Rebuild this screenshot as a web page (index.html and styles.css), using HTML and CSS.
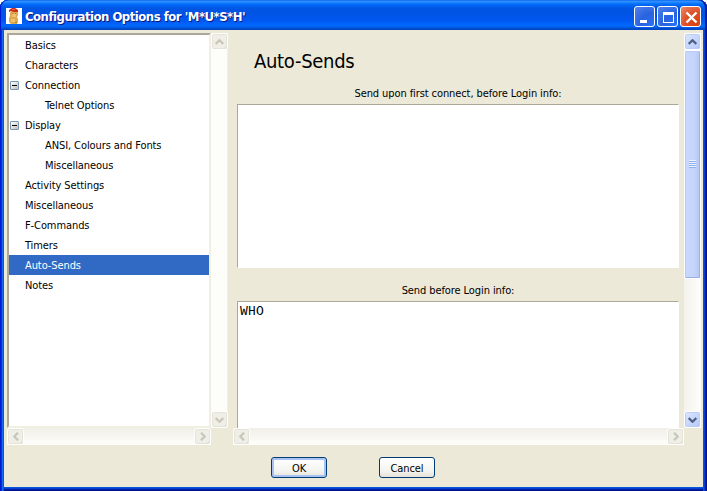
FILE: index.html
```html
<!DOCTYPE html>
<html lang="en">
<head>
<meta charset="utf-8">
<title>Configuration Options for 'M*U*S*H'</title>
<link rel="stylesheet" href="styles.css">
</head>
<body>
<svg width="0" height="0" class="defs">
  <symbol id="up" viewBox="0 0 9 6"><path d="M.7 5 4.5 1.3 8.3 5" fill="none" stroke="currentColor" stroke-width="2.3"/></symbol>
  <symbol id="down" viewBox="0 0 9 6"><path d="M.7 1 4.5 4.7 8.3 1" fill="none" stroke="currentColor" stroke-width="2.3"/></symbol>
  <symbol id="left" viewBox="0 0 6 9"><path d="M5 .7 1.3 4.5 5 8.3" fill="none" stroke="currentColor" stroke-width="2.3"/></symbol>
  <symbol id="right" viewBox="0 0 6 9"><path d="M1 .7 4.7 4.5 1 8.3" fill="none" stroke="currentColor" stroke-width="2.3"/></symbol>
</svg>
<div class="window">
  <header class="titlebar">
    <svg class="app-icon" width="16" height="16" viewBox="0 0 16 16">
      <path d="M0 0h16v16H0z" fill="#fff"/>
      <path d="M5 3h7v4l-1 2 1 2v3l-1 2H5l-2-2v-4l1-2V5z" fill="#dfa950"/>
      <path d="M6 6h4v3H6zM5 11h4v3H5z" fill="#ecc271"/>
      <path d="M6 5h1v1H6zM9 5h1v1H9zM9 14h2v1H9z" fill="#b87b28"/>
      <path d="M3 2 6 0h3l3 2v2H8L5 3 3 4z" fill="#cf2c19"/>
      <path d="M6 1h3v1H6z" fill="#e55a45"/>
    </svg>
    <h1 class="title">Configuration Options for 'M*U*S*H'</h1>
    <div class="controls">
      <button class="ctl" aria-label="Minimize"><svg width="21" height="21" viewBox="0 0 21 21"><path d="M5 13h7v3H5z" fill="#fff"/></svg></button>
      <button class="ctl" aria-label="Maximize"><svg width="21" height="21" viewBox="0 0 21 21"><path d="M5 5h11v11H5zM6 8v7h9V8z" fill="#fff" fill-rule="evenodd"/></svg></button>
      <button class="ctl close" aria-label="Close"><svg width="21" height="21" viewBox="0 0 21 21"><path d="m5.5 5.5 10 10m0-10-10 10" stroke="#fff" stroke-width="2.4"/></svg></button>
    </div>
  </header>
  <main class="panes">
    <ul class="tree">
      <li>Basics</li>
      <li>Characters</li>
      <li class="parent"><i class="toggle"></i>Connection</li>
      <li class="child">Telnet Options</li>
      <li class="parent"><i class="toggle"></i>Display</li>
      <li class="child">ANSI, Colours and Fonts</li>
      <li class="child">Miscellaneous</li>
      <li>Activity Settings</li>
      <li>Miscellaneous</li>
      <li>F-Commands</li>
      <li>Timers</li>
      <li class="selected">Auto-Sends</li>
      <li>Notes</li>
    </ul>
    <div class="scroll vertical disabled">
      <span class="arrow"><svg width="9" height="6"><use href="#up"/></svg></span>
      <span class="arrow"><svg width="9" height="6"><use href="#down"/></svg></span>
    </div>
    <section class="page">
      <h2 class="heading">Auto-Sends</h2>
      <div class="label first">Send upon first connect, before Login info:</div>
      <div class="field"></div>
      <div class="label second">Send before Login info:</div>
      <div class="field clipped">WHO</div>
    </section>
    <div class="scroll vertical">
      <span class="arrow"><svg width="9" height="6"><use href="#up"/></svg></span>
      <span class="thumb"><i class="grip"></i></span>
      <span class="arrow last"><svg width="9" height="6"><use href="#down"/></svg></span>
    </div>
    <div class="scroll horizontal disabled tree-scroll">
      <span class="arrow"><svg width="6" height="9"><use href="#left"/></svg></span>
      <span class="arrow"><svg width="6" height="9"><use href="#right"/></svg></span>
    </div>
    <div class="scroll horizontal disabled page-scroll">
      <span class="arrow"><svg width="6" height="9"><use href="#left"/></svg></span>
      <span class="arrow"><svg width="6" height="9"><use href="#right"/></svg></span>
    </div>
  </main>
  <footer class="actions">
    <button class="btn default">OK</button>
    <button class="btn">Cancel</button>
  </footer>
</div>
</body>
</html>
```

FILE: styles.css
```css
* { box-sizing: border-box; }

body {
  margin: 0;
  background: #fff;
  color: #000;
  font: 11px/22px "DejaVu Sans Condensed", "DejaVu Sans", sans-serif;
  font-stretch: condensed;
  letter-spacing: -0.09px;
  overflow: hidden;
}

.defs { display: block; }

.window {
  width: 707px;
  height: 491px;
  border-radius: 8px 8px 0 0;
  background: #ece9d8;
  box-shadow: inset 1px 0 #0019cf, inset 2px 0 #0831d9, inset 3px 0 #166aee, inset 4px 0 #0855dd,
    inset -1px 0 #00138c, inset -2px 0 #001ea0, inset -3px 0 #0441d8, inset -4px 0 #0855dd,
    inset 0 -1px #00138c, inset 0 -2px #001ea0, inset 0 -3px #0441d8, inset 0 -4px #0855dd;
}

.titlebar {
  display: flex;
  align-items: center;
  height: 30px;
  padding: 2px 6px 0 6px;
  border-radius: 8px 8px 0 0;
  background: linear-gradient(#0058ee 0, #3593ff 1px, #288eff 2px, #127dff 3px, #036ffc 4px, #0262ee 6px, #0057e5 8px, #0054e3 12px, #0055eb 18px, #005bf5 22px, #026afe 25px, #0062ef 27px, #0052d6 28px, #0042b8 30px);
  box-shadow: inset 1px 0 #0019cf, inset -2px 0 #001ea0;
}

.title {
  flex: 1;
  margin: 0 0 0 3px;
  padding-top: 2px;
  color: #fff;
  font: bold 13px/20px "DejaVu Sans Condensed", sans-serif;
  font-stretch: condensed;
  letter-spacing: -0.5px;
  white-space: nowrap;
  text-shadow: 1px 1px #0a1883;
}

.controls { display: flex; gap: 2px; }

.ctl {
  display: grid;
  place-items: center;
  width: 21px;
  height: 21px;
  padding: 0;
  border: 1px solid #fff;
  border-radius: 3px;
  background: radial-gradient(circle at 85% 90%, #2a70f2, #2962df 45%, #4f83ec 100%);
}
.ctl svg { flex: none; }
.ctl.close { background: radial-gradient(circle at 85% 90%, #d9440f, #dd4f26 50%, #ec8a6c 100%); }

.panes {
  display: grid;
  grid-template: 395px 17px / 204px 17px 456px 17px;
  padding: 3px 0 0 7px;
}

.tree {
  height: 395px;
  margin: 0;
  padding: 0;
  list-style: none;
  background: #fff;
  border: 2px solid;
  border-color: #aca899 #f1efe2 #f1efe2 #aca899;
}
.tree li { height: 20px; padding-left: 16px; white-space: nowrap; }
.tree .child { padding-left: 36px; }
.tree .parent { display: flex; align-items: center; padding-left: 1px; line-height: 20px; padding-top: 1px; }
.tree .selected { background: #316ac5; color: #fff; }

.toggle {
  flex: none;
  width: 9px;
  height: 9px;
  margin-right: 6px;
  border: 1px solid #7898b5;
  border-radius: 1px;
  background: linear-gradient(#000, #000) center / 5px 1px no-repeat, linear-gradient(135deg, #fff, #c5bfb0);
}

.scroll { display: flex; justify-content: space-between; color: #4d6185; }
.vertical { flex-direction: column; background: linear-gradient(90deg, #f3f2eb, #fefefb); }
.vertical.disabled { background: #fdfdfa; border-right: 1px solid #f1efe2; }
.horizontal { background: linear-gradient(#f0efe8, #fefefb); }
.disabled { color: #c9c7ba; }

.arrow {
  display: grid;
  place-items: center;
  flex: none;
  width: 17px;
  height: 17px;
  border: 1px solid #fff;
  border-radius: 3px;
  background: linear-gradient(135deg, #dce6fe, #b4c8f8);
  box-shadow: inset 0 0 0 1px #bccdf5, inset -1px -1px #9cb3e4;
}
.disabled .arrow {
  background: #efeee7;
  box-shadow: inset 0 0 0 1px #e4e3d8, inset -1px -1px #d0cec0;
}

.thumb {
  display: grid;
  place-items: center;
  height: 229px;
  border: 1px solid #fff;
  border-radius: 2px;
  background: linear-gradient(90deg, #c9d8fc, #c5d4fc 60%, #b5c7f3);
  box-shadow: inset -1px -1px #98b0e4, inset 1px 1px #b9cbf5;
}
.thumb + .last { margin-top: auto; }
.grip {
  width: 7px;
  height: 8px;
  margin-top: -2px;
  background: repeating-linear-gradient(#eef4fe 0 1px, #8cb0f8 1px 2px);
}

.page {
  display: flex;
  flex-direction: column;
  margin-left: 9px;
  overflow: hidden;
}
.page-scroll { grid-column: 3; margin-left: 5px; }
.tree-scroll { grid-column: 1; }

.heading {
  height: 50px;
  margin: 0;
  padding: 13px 0 0 17px;
  font: 20px/30px "DejaVu Sans Condensed", sans-serif;
  font-stretch: condensed;
  letter-spacing: -0.3px;
}

.label { width: 442px; text-align: center; white-space: nowrap; }
.first { height: 21px; }
.second { height: 33px; padding-top: 12px; }

.field {
  flex: none;
  width: 442px;
  height: 164px;
  background: #fff;
  border: 1px solid;
  border-color: #aca899 #fff #fff #aca899;
}
.clipped {
  height: 127px;
  padding: 2px 2px;
  border-bottom: 0;
  font: 13px/16px "Liberation Mono", monospace;
  letter-spacing: 0.2px;
}

.actions { display: flex; gap: 52px; padding: 12px 0 0 271px; }
.btn {
  width: 56px;
  height: 21px;
  padding: 0;
  border: 1px solid #003c74;
  border-radius: 3px;
  background: linear-gradient(#fff, #f3f3ef 70%, #e5e1d7);
  color: #000;
  font: inherit;
  line-height: 21px;
  letter-spacing: inherit;
}
.default { box-shadow: inset 0 0 0 2px #a8c3f3; }
```
